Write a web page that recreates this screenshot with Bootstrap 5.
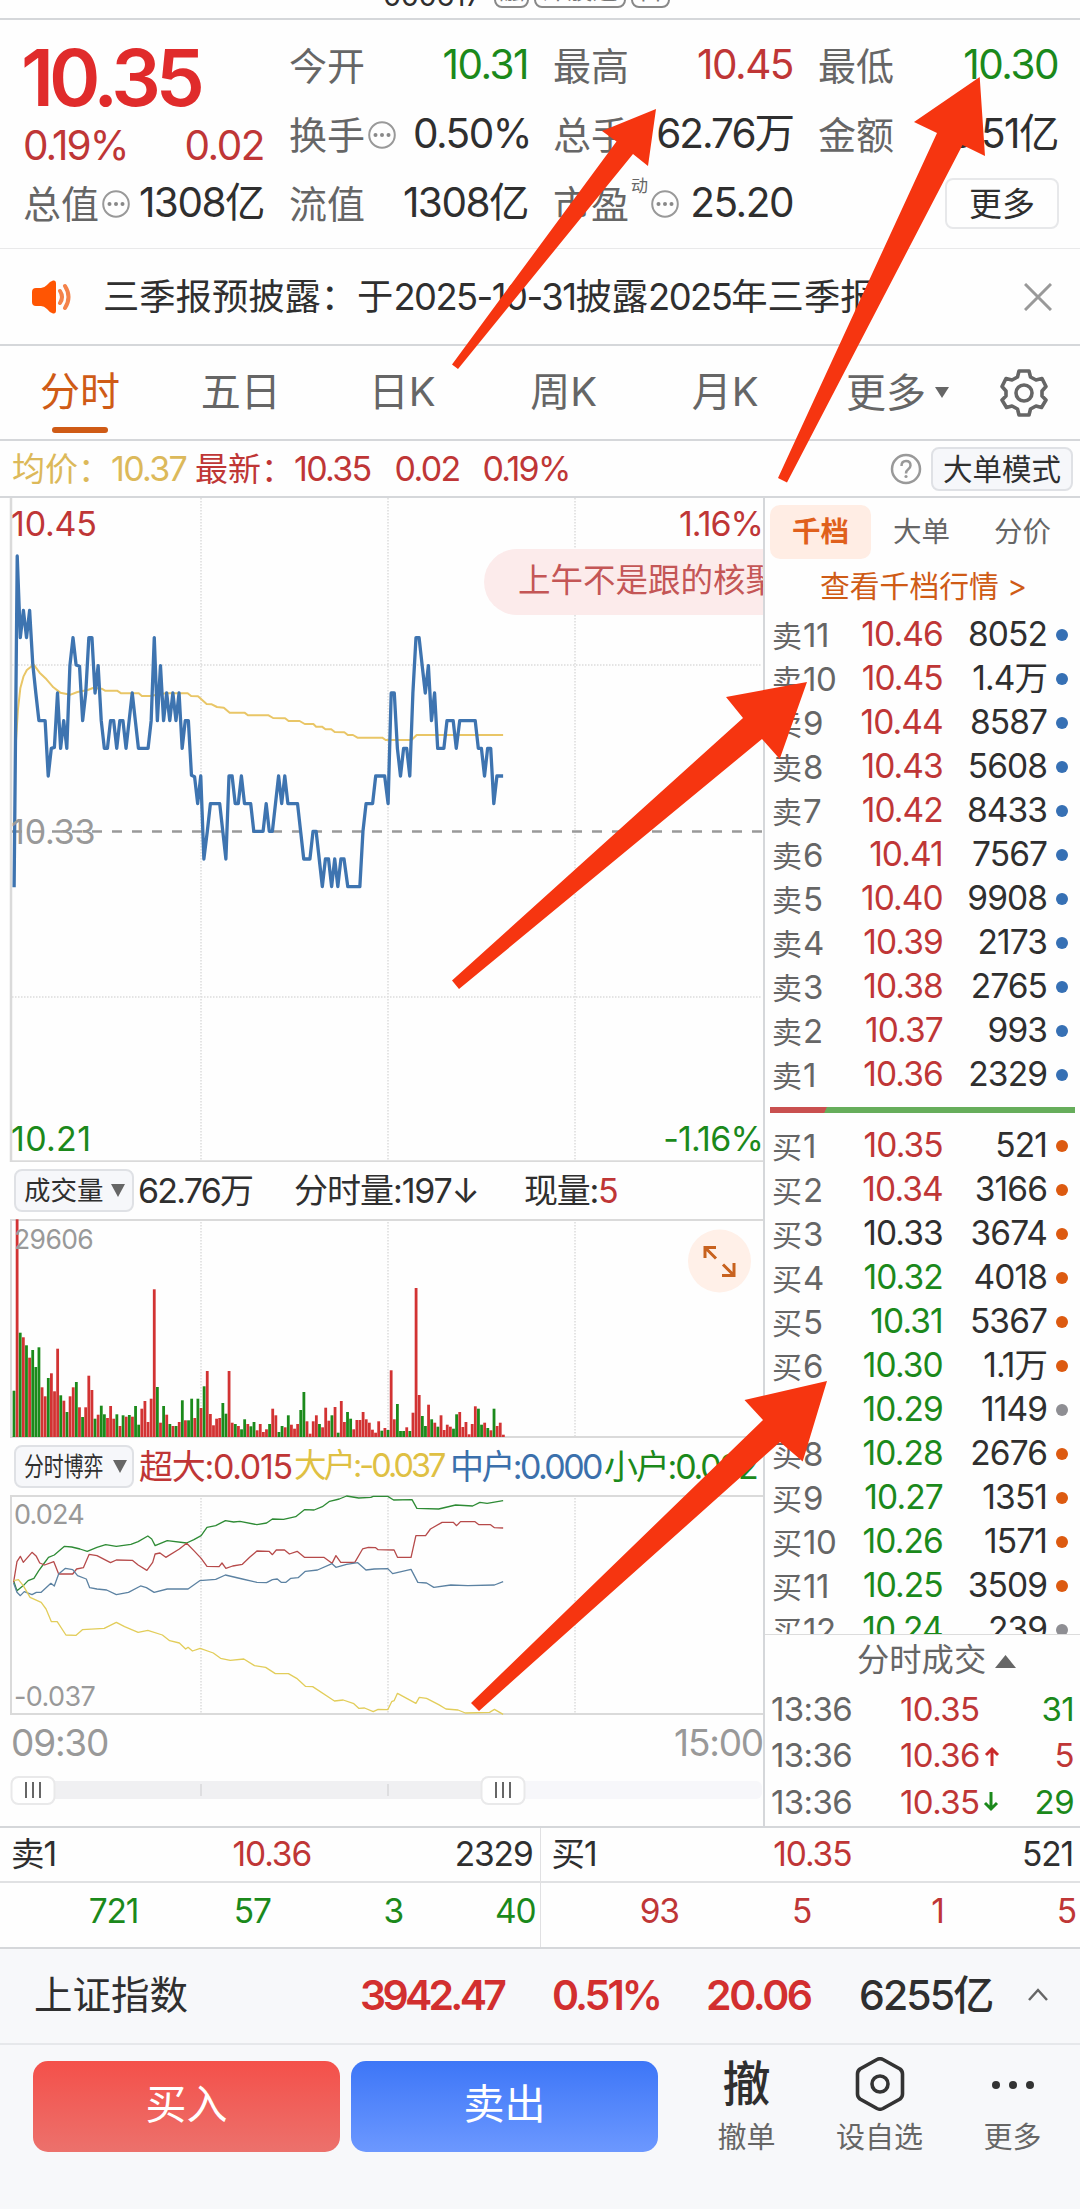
<!DOCTYPE html>
<html lang="zh-CN">
<head>
<meta charset="utf-8">
<meta name="viewport" content="width=device-width, initial-scale=1">
<title>000617 分时</title>
<link rel="stylesheet" href="https://cdn.jsdelivr.net/npm/bootstrap@5.3.0/dist/css/bootstrap.min.css">
<style>
:root{--up:#bf3636;--down:#1b891b;--ink:#2f2f2f;--soft:#666;--rule:#d5d7da;--brand:#cf5b16}
body{width:1080px;height:2209px;overflow:hidden;position:relative;background:#fefefe;color:var(--ink);font-family:Inter,"Noto Sans CJK SC",sans-serif;line-height:1}
svg{display:block;flex:none}
.up{color:var(--up)}.dn{color:var(--down)}.soft{color:var(--soft)}.pale{color:#999}.brand{color:var(--brand)}.gold{color:#dcb95a}
.rule-b{border-bottom:2px solid var(--rule)}
.topbar{height:20px;padding-left:383px;gap:5px}
.topbar .code{font-size:29px;line-height:30px;margin-top:-19px;width:106px;letter-spacing:-.5px}
.topbar .tagbox{border:2px solid #888;border-radius:8px;height:36px;margin-top:-28px;font-size:25px;color:#777;line-height:33px;text-align:center}
.quote{height:229px;padding:11px 23px 0 23px;grid-template-columns:241px 239px 240px 240px;column-gap:25px;display:grid;grid-template-rows:69px 69px 69px;border-bottom:1px solid #e9e9ea}
.quote .cell{display:flex;align-items:center;justify-content:space-between;font-size:40.5px;letter-spacing:-1.5px;white-space:nowrap}
.quote .lbl{font-size:38px;letter-spacing:0;color:var(--soft);display:flex;align-items:center}
.price{font-size:78px;font-weight:600;color:#e02b2b;letter-spacing:-5px;line-height:94px;margin-left:-2px}
.sup{font-size:17px;align-self:flex-start;margin:-7px 0 0 2px}
.btn-more{width:114px;height:51px;border:2px solid #e7e8ea;border-radius:8px;font-size:33px;letter-spacing:0;color:var(--ink);padding:0;position:relative;left:1px}
.notice{height:97px;padding:0 28px 0 31px}
.notice .msg{width:767px;margin-left:30px;overflow:hidden;white-space:nowrap;font-size:36.3px;line-height:52px}
.notice .msg b{font-weight:400;letter-spacing:-1.5px}
.tabs{height:95px;font-size:40px;color:var(--soft);padding-right:32px}
.tabs .tab{width:161.500px;height:93px;text-align:center;padding-top:26px;position:relative}
.tabs .tab.on{color:var(--brand)}
.tabs .tab.on:after{content:"";position:absolute;left:52px;bottom:6px;width:56px;height:6px;border-radius:3px;background:var(--brand)}
.avg{height:57px;font-size:34px;letter-spacing:-1.7px;padding:0 7px 0 12px;white-space:nowrap}
.avg i{font-style:normal;font-size:33px;letter-spacing:0}
.chip{background:#f6f7fa;border:2px solid #dfe1e5;border-radius:8px;padding:0;color:var(--ink)}
.main{height:1330px}
.left{width:765px;border-right:2px solid var(--rule);position:relative}
.plot{position:relative;margin-left:0}
.axis{position:absolute;font-size:34px;letter-spacing:-.2px;line-height:34px}
.bubble{position:absolute;left:484px;top:51px;width:279px;height:66px;border-radius:33px 0 0 33px;background:#fcebeb;color:#c45656;font-size:32.5px;line-height:64px;padding-left:34px;white-space:nowrap;overflow:hidden}
.strip{height:57px;padding-left:14px;font-size:34px;letter-spacing:-1.3px;white-space:nowrap}
.strip .chip{width:120px;height:43px;font-size:26.5px;letter-spacing:0;display:flex;align-items:center;padding-left:8px;flex:none}
.squeeze{display:inline-block;transform:scaleX(.75);transform-origin:left center;width:80px}
.right{width:315px}
.right .seg{height:54px;margin:7px 0 0 5px;font-size:28.5px;line-height:54px;text-align:center;color:var(--soft)}
.right .seg>div{width:101px}
.right .seg .on{background:#ffede4;border-radius:10px;color:#e0601c;font-weight:700}
.right .go{height:54px;line-height:54px;font-size:29.8px;padding-left:55px;color:var(--brand)}
.bk{height:44px;padding:0 12px 0 7px;font-size:33.5px;letter-spacing:-.9px;display:flex;align-items:center;white-space:nowrap}
.bk .n{width:84px;color:var(--soft);font-size:33px;letter-spacing:-.4px}
.bk .n u{text-decoration:none;font-size:30px;letter-spacing:1px}
.bk .p{width:88px;text-align:right}
.bk .q{width:105px;text-align:right}
.bk .o{width:12px;height:12px;border-radius:50%;margin-left:9px;background:#3670b4}
.split{height:6px;margin:10px 5px 11px;background:linear-gradient(115deg,#c9504f 18.4%,#66ad5b 18.6%)}
.buys{height:511px;overflow:hidden;border-bottom:1px solid #dcdcdc}
.deal{height:46.5px;padding:0 6px;font-size:33px;letter-spacing:-.6px;display:flex;align-items:center}
.half{width:541px;border-right:1px solid #e0e0e2}
.half .r1,.half .r2{display:flex;align-items:center;font-size:33.5px;letter-spacing:-1.1px}
.half .r1{height:55px;padding:0 7px 0 11px;border-bottom:2px solid #e0e1e3}
.half .r2{height:64px;padding:0 4px 6px 6px}
.half .r1>*{flex:1}.half .r2>*{width:132.4px;text-align:right}
.foot{background:#f7f8fa;height:260px}
.idx{height:96px;padding:0 32px 2px 34px;font-size:41px;font-weight:600;letter-spacing:-2.4px;border-bottom:2px solid #e6e8eb;white-space:nowrap}
.act{padding:16px 0 0 33px}
.act .btn{width:307px;height:91px;border:0;border-radius:15px;color:#fff;font-size:41px;padding:0 0 4px}
.buy{background:linear-gradient(#f4504a,#ec716c)}
.sell{background:linear-gradient(#3d76f7,#6c98ff)}
.tool{width:133px;text-align:center;font-size:29px;color:var(--soft)}
.tool .ic{height:46px;display:flex;align-items:center;justify-content:center;font-size:48px;color:var(--ink);font-weight:500;margin-bottom:16px}
.marks{position:absolute;left:0;top:0;z-index:5;pointer-events:none}
.thin{vector-effect:non-scaling-stroke;fill:none;stroke-linejoin:round}
</style>
</head>
<body>
<header class="topbar d-flex rule-b overflow-hidden">
  <div class="code">000617</div><div class="tagbox" style="width:35px">融</div><div class="tagbox" style="width:92px">深股通</div><div class="tagbox" style="width:39px">百</div>
</header>

<section class="quote">
  <div style="grid-row:1/3"><div class="price">10.35</div><div class="cell up" style="margin-top:1px"><span style="letter-spacing:-1.900px">0.19%</span><span>0.02</span></div></div>
  <div class="cell"><span class="lbl">今开</span><span class="dn">10.31</span></div>
  <div class="cell"><span class="lbl">最高</span><span class="up">10.45</span></div>
  <div class="cell"><span class="lbl">最低</span><span class="dn">10.30</span></div>
  <div class="cell"><span class="lbl">换手<svg width="32" height="30"><use href="#dots"/></svg></span><span style="margin-right:-3px">0.50%</span></div>
  <div class="cell"><span class="lbl">总手</span><span style="letter-spacing:-2px">62.76万</span></div>
  <div class="cell"><span class="lbl">金额</span><span>6.51亿</span></div>
  <div class="cell"><span class="lbl">总值<svg width="32" height="30"><use href="#dots"/></svg></span><span>1308亿</span></div>
  <div class="cell"><span class="lbl">流值</span><span>1308亿</span></div>
  <div class="cell"><span class="lbl">市盈<span class="sup">动</span><svg width="32" height="30"><use href="#dots"/></svg></span><span>25.20</span></div>
  <div class="cell justify-content-end"><button class="btn btn-more">更多</button></div>
</section>

<section class="notice d-flex align-items-center rule-b">
  <svg width="42" height="36" viewBox="0 0 42 36"><path d="M1 13q0-4 4-4h5q3 0 6-3 3-4 6-4.500 3-.5 3 3v27q0 3.500-3 3-3-.5-6-4.500-3-3-6-3H5q-4 0-4-4z" fill="#ff5503"/><path d="M29 12q4 6 0 12M34 7q7 11 0 22" fill="none" stroke="#f4824a" stroke-width="4" stroke-linecap="round"/></svg>
  <div class="msg">三季报预披露：于<b>2025-10-31</b>披露<b>2025</b>年三季报</div>
  <svg class="ms-auto" width="28" height="28" viewBox="-1 -1 28 28"><path d="M0 0l26 26M26 0L0 26" stroke="#999" stroke-width="3"/></svg>
</section>

<nav class="tabs d-flex align-items-center rule-b">
  <div class="tab on" style="width:160px">分时</div><div class="tab">五日</div><div class="tab">日K</div><div class="tab">周K</div><div class="tab">月K</div>
  <div class="d-flex align-items-center" style="margin-left:40px">更多<svg class="ms-2" width="16" height="13"><path d="M1 1h14L8 12z" fill="#666"/></svg></div>
  <svg class="ms-auto" width="48" height="50" viewBox="-24 -25 48 50" fill="none" stroke="#666" stroke-width="3.600"><path d="M-5-22H5L6.500-16 12-13 18-14.500 22-6.500 18-2V3L22 7 17.500 14.500 12 13 6.500 16 5 22H-5L-6.500 16-12 13-17.500 14.500-22 7-18 3V-2L-22-6.500-18-14.500-12-13-6.500-16z" stroke-linejoin="round"/><circle r="8"/></svg>
</nav>

<section class="avg d-flex align-items-center rule-b">
  <span class="gold"><i>均价：</i>10.37</span><span class="up" style="margin-left:9px"><i>最新：</i>10.35</span><span class="up" style="margin-left:24px">0.02</span><span class="up" style="margin-left:23px">0.19%</span>
  <svg class="ms-auto" width="32" height="32" viewBox="0 0 32 32"><circle cx="16" cy="16" r="14" fill="none" stroke="#999" stroke-width="2.500"/><path d="M11.500 13q0-5 4.500-5t4.500 4.500q0 2-2.500 4-2 1.500-2 4" fill="none" stroke="#999" stroke-width="2.500"/><circle cx="16" cy="23.500" r="1.600" fill="#999"/></svg>
  <button class="btn chip" style="width:142px;height:44px;font-size:29.500px;letter-spacing:0;line-height:38px;margin-left:9px">大单模式</button>
</section>

<main class="main d-flex rule-b">
  <div class="left">
    <div class="plot" style="height:664px">
      <svg width="763" height="664" viewBox="0 498 763 664">
        <g stroke="#dcdcdc" stroke-width="1.500" stroke-dasharray="1.500 1.500"><path d="M201 498V1162M388 498V1162M575 498V1162M12 665H762M12 997H762"/></g>
        <path d="M11 498V1162M11 1161.500H763" stroke="#dadada" stroke-width="2.500" fill="none"/>
        <path d="M12 831.500H762" stroke="#999" stroke-width="2.500" stroke-dasharray="10 10"/>
        <g transform="translate(0 490) scale(.34436 .33333)">
          <polyline class="thin" stroke="#e9c667" stroke-width="2" points="46,760 52,660 59,595 68,560 78,540 98,524 115,548 135,568 155,592 175,608 205,614 225,606 255,600 270,594 295,596 305,602 340,602 352,610 403,610 412,618 435,618 470,612 480,610 545,610 555,618 575,619 600,642 615,643 630,651 650,653 667,668 710,668 720,676 780,676 793,684 828,685 838,693 870,693 885,702 910,702 918,710 935,710 945,718 962,718 972,726 1000,727 1010,735 1025,735 1038,743 1110,743 1120,750 1195,750 1210,735 1461,735"/>
          <polyline class="thin" stroke="#3e74b0" stroke-width="3.300" points="41,1192 50,198 59,443 68,361 77,443 86,361 95,520 104,609 113,692 131,692 140,858 149,775 158,772 167,609 176,775 185,692 194,775 203,527 212,443 221,525 231,529 240,692 249,609 258,443 267,443 276,609 285,527 294,692 303,775 312,775 321,692 330,692 339,775 348,692 357,692 366,775 375,692 384,609 393,692 402,775 430,775 439,692 448,443 457,692 466,527 475,692 484,609 493,692 502,609 511,692 520,609 529,775 538,692 547,692 556,856 565,860 574,941 583,858 592,1107 602,1024 611,941 638,941 647,1024 656,1107 665,858 674,858 683,941 692,941 701,858 710,941 728,941 737,1024 764,1024 773,941 782,1024 791,1024 800,941 809,858 818,941 827,858 836,941 864,941 873,1024 882,1107 900,1107 909,1024 918,1024 927,1107 936,1190 945,1107 954,1107 963,1190 972,1107 981,1190 990,1107 999,1107 1010,1190 1045,1190 1054,1024 1063,941 1082,941 1091,858 1117,858 1127,941 1136,609 1145,609 1154,775 1163,858 1172,775 1181,775 1190,858 1199,609 1208,443 1217,443 1226,527 1235,609 1244,527 1253,692 1262,609 1271,775 1289,775 1298,692 1316,692 1325,775 1335,692 1380,692 1389,775 1398,775 1407,858 1416,775 1425,775 1434,941 1443,858 1461,858"/>
        </g>
      </svg>
      <div class="axis up" style="left:11px;top:9px">10.45</div>
      <div class="axis up" style="right:0;top:9px;letter-spacing:-1px">1.16%</div>
      <div class="axis pale" style="left:11px;top:317px">10.33</div>
      <div class="axis dn" style="left:11px;bottom:6px;letter-spacing:.3px">10.21</div>
      <div class="axis dn" style="right:0;bottom:6px;letter-spacing:-.8px">-1.16%</div>
      <div class="bubble">上午不是跟的核聚变</div>
    </div>
    <div class="strip d-flex align-items-center">
      <div class="chip"><span class="me-auto">成交量</span><svg width="22" height="15"><path d="M1 1h14L8 14z" fill="#666"/></svg></div>
      <span style="margin-left:4px;width:156px;letter-spacing:-1.800px">62.76万</span><span style="width:230px"><span style="letter-spacing:-1px">分时量:</span>197↓</span><span>现量:<span class="up">5</span></span>
    </div>
    <div class="plot" style="height:219px">
      <svg width="763" height="219" viewBox="0 1220 763 219">
        <path d="M201 1220V1438M388 1220V1438M575 1220V1438" stroke="#dcdcdc" stroke-width="1.500" stroke-dasharray="1.500 1.500"/>
        <path d="M763 1221H11V1438H763" stroke="#dadada" stroke-width="2" fill="none"/>
        <g id="vol"></g>
        <circle cx="719.500" cy="1262" r="31.500" fill="#fff0e8"/>
        <path d="M705 1259V1248.500H716M705.500 1249L716 1259.500M734 1264V1276.500H722M733.500 1276L723 1265.500" fill="none" stroke="#c8621f" stroke-width="3"/>
      </svg>
      <div class="axis pale" style="left:14px;top:3px;font-size:26.500px;letter-spacing:-.6px">29606</div>
    </div>
    <div class="strip d-flex align-items-center">
      <div class="chip"><span class="squeeze">分时博弈</span><svg style="margin-left:8px" width="18" height="15"><path d="M1 1h14L8 14z" fill="#666"/></svg></div>
      <span class="up" style="margin-left:5px;width:155px">超大:0.015</span><span style="color:#dfc043;width:156px;letter-spacing:-3px;font-size:32.500px">大户:-0.037</span><span style="color:#3b70ac;width:154px;letter-spacing:-2.600px">中户:0.000</span><span class="dn" style="letter-spacing:-2.200px">小户:0.022</span>
    </div>
    <div class="plot" style="height:220px">
      <svg width="763" height="220" viewBox="0 1496 763 220">
        <path d="M201 1496V1715M388 1496V1715M575 1496V1715" stroke="#dcdcdc" stroke-width="1.500" stroke-dasharray="1.500 1.500"/>
        <path d="M763 1497H11V1715H763" stroke="#dadada" stroke-width="2" fill="none"/>
        <g transform="translate(0 1440) scale(.48473 .33333)" stroke-width="1.300">
          <polyline class="thin" stroke="#2e8b35" points="28,425 35,455 50,437 58,425 70,418 80,395 90,375 100,355 112,348 133,322 148,324 165,330 180,337 200,325 218,317 240,322 270,316 285,308 305,291 313,300 320,320 345,305 385,312 400,302 415,290 427,265 445,260 465,245 482,249 495,247 530,257 550,252 562,240 585,241 610,233 628,212 648,213 665,203 680,187 700,180 715,171 740,177 765,175 770,172 800,172 812,183 850,182 860,208 905,210 940,198 975,201 990,190 1005,193 1038,185"/>
          <polyline class="thin" stroke="#b64a4a" points="28,430 35,368 42,352 48,370 66,340 75,352 82,372 92,378 111,368 121,405 150,405 158,390 172,386 184,346 200,350 228,371 240,363 273,364 285,378 303,394 315,370 320,345 330,342 342,355 370,330 385,313 400,335 415,358 427,382 452,383 458,372 466,388 480,381 500,376 515,355 530,336 555,337 562,347 570,333 587,333 597,345 613,337 628,355 668,355 685,373 693,350 703,370 732,370 748,330 760,325 775,326 780,332 813,333 820,355 848,355 858,290 878,290 888,270 912,250 935,250 942,260 950,248 980,248 988,257 1012,257 1020,266 1038,267"/>
          <polyline class="thin" stroke="#5c82a2" points="28,432 35,460 42,470 50,458 66,467 75,460 85,460 105,433 112,441 121,405 135,388 150,392 160,410 178,420 185,446 200,450 220,453 240,467 265,460 290,441 302,446 318,460 345,450 388,450 412,425 445,421 465,408 500,420 530,430 550,431 562,422 572,420 580,430 590,430 600,418 615,416 630,397 655,393 685,374 693,385 715,376 738,371 755,393 772,390 800,389 810,404 848,391 862,430 880,432 895,445 930,438 965,440 1020,438 1038,428"/>
          <polyline class="thin" stroke="#e2cd5a" points="28,425 38,422 48,440 62,475 85,490 95,510 106,548 118,548 136,588 157,589 170,572 215,568 240,550 257,563 285,580 305,574 335,588 350,605 370,612 383,630 388,625 397,636 413,628 440,642 455,658 475,664 503,660 525,680 548,685 568,704 595,704 612,718 630,742 645,743 690,786 708,783 730,794 740,808 752,807 770,818 780,811 800,812 808,788 813,785 820,763 858,793 865,775 880,778 905,797 920,810 945,813 960,822 1010,820 1020,811 1038,826"/>
        </g>
      </svg>
      <div class="axis pale" style="left:14px;top:3px;font-size:27px;letter-spacing:-.8px">0.024</div>
      <div class="axis pale" style="left:14px;bottom:1px;font-size:27px;letter-spacing:-.6px">-0.037</div>
    </div>
    <div class="d-flex justify-content-between pale" style="font-size:37px;letter-spacing:-1.200px;padding:9px 0 0 11px;height:54px"><span>09:30</span><span>15:00</span></div>
    <svg width="763" height="40" viewBox="0 1771 763 40">
      <rect x="12" y="1783" width="750" height="18" rx="6" fill="#f7f7fa"/><rect x="20" y="1783" width="480" height="18" fill="#f0f0f2"/>
      <path d="M201 1786v12M388 1786v12" stroke="#dedee0" stroke-width="2"/>
      <g fill="#fff" stroke="#e9e9ea" stroke-width="2"><rect x="11.500" y="1779" width="43" height="27" rx="7"/><rect x="481.500" y="1779" width="43" height="27" rx="7"/></g>
      <path d="M26 1784v16M33 1784v16M40 1784v16M496 1784v16M503 1784v16M510 1784v16" stroke="#666" stroke-width="2"/>
    </svg>
  </div>

  <div class="right">
    <div class="seg d-flex"><div class="on">千档</div><div>大单</div><div>分价</div></div>
    <div class="go">查看千档行情 &gt;</div>
    <div id="sells"></div>
    <div class="split"></div>
    <div id="buys" class="buys"></div>
    <div class="d-flex align-items-center soft" style="height:51px;padding-left:92px;font-size:32.300px">分时成交<svg style="margin-left:9px" width="22" height="14"><path d="M0 14L10.500 1 21 14z" fill="#666"/></svg></div>
    <div class="deal"><span class="soft" style="width:129px">13:36</span><span class="up">10.35</span><span class="ms-auto dn">31</span></div>
    <div class="deal"><span class="soft" style="width:129px">13:36</span><span class="up">10.36</span><svg class="ms-1" width="16" height="20"><path d="M8 20V3M2 9l6-6 6 6" fill="none" stroke="#c92a2a" stroke-width="3"/></svg><span class="ms-auto up">5</span></div>
    <div class="deal"><span class="soft" style="width:129px">13:36</span><span class="up">10.35</span><svg class="ms-1" width="16" height="20"><path d="M8 0V17M2 11l6 6 6-6" fill="none" stroke="#1b891b" stroke-width="3"/></svg><span class="ms-auto dn">29</span></div>
  </div>
</main>

<section class="d-flex rule-b">
  <div class="half"><div class="r1"><span>卖1</span><span class="up text-center">10.36</span><span class="text-end">2329</span></div><div class="r2 dn"><span>721</span><span>57</span><span>3</span><span>40</span></div></div>
  <div class="half border-end-0"><div class="r1"><span>买1</span><span class="up text-center">10.35</span><span class="text-end">521</span></div><div class="r2 up"><span>93</span><span>5</span><span>1</span><span>5</span></div></div>
</section>

<footer class="foot">
  <div class="idx d-flex align-items-center">
    <span style="font-size:38.500px;font-weight:400;letter-spacing:0;width:326px">上证指数</span><span style="color:#d22f2f;width:192px;letter-spacing:-3.700px">3942.47</span><span style="color:#d22f2f;width:154px;letter-spacing:-3px">0.51%</span><span style="color:#d22f2f;width:153px">20.06</span><span style="font-weight:500;letter-spacing:-1.900px">6255亿</span>
    <svg class="ms-auto" width="20" height="14"><path d="M1 12L10 2l9 10" fill="none" stroke="#666" stroke-width="2.500"/></svg>
  </div>
  <div class="act d-flex">
    <button class="btn buy">买入</button><button class="btn sell" style="margin-left:11px">卖出</button>
    <div class="tool" style="margin-left:22px"><div class="ic">撤</div>撤单</div>
    <div class="tool"><div class="ic"><svg width="50" height="54" viewBox="-25 -27 50 54" fill="none" stroke="#333" stroke-width="3.600"><path d="M-3-24.500Q0-26 3-24.500L20-15Q22.500-13 22.500-10V10Q22.500 13 20 15L3 24.500Q0 26-3 24.500L-20 15Q-22.500 13-22.500 10V-10Q-22.500-13-20-15z"/><circle r="8"/></svg></div>设自选</div>
    <div class="tool"><div class="ic"><svg width="44" height="10"><g fill="#333"><circle cx="5" cy="6" r="4"/><circle cx="22" cy="6" r="4"/><circle cx="39" cy="6" r="4"/></g></svg></div>更多</div>
  </div>
</footer>

<svg class="marks" width="1080" height="2209" fill="#f63510">
  <defs><g id="dots"><circle cx="17" cy="15" r="12.800" fill="none" stroke="#999" stroke-width="2"/><g fill="#888"><circle cx="10.500" cy="15" r="2"/><circle cx="17" cy="15" r="2"/><circle cx="23.500" cy="15" r="2"/></g></g></defs>
  <path d="M656 109L602 131 616.500 141.500 452 364.500 458 369 633 154 648 166z"/>
  <path d="M979.700 77L914 122 937 133 778 478 787 482.500 962.500 145 985 156z"/>
  <path d="M807 682L726 697 743 718 452 980.500 459 989 762 739 779.700 759z"/>
  <path d="M827 1381L744.500 1400 763 1420 471 1703 479 1711 780 1442 802.700 1461.500z"/>
</svg>

<script src="https://cdn.jsdelivr.net/npm/bootstrap@5.3.0/dist/js/bootstrap.bundle.min.js"></script>
<script>
// Order book: side label, level, price, quantity, price class, marker colour
const row=(s,n,p,q,c,o)=>`<div class="bk"><span class="n"><u>${s}</u>${n}</span><span class="p ${c}">${p}</span><span class="q">${q}</span><span class="o" style="background:${o}"></span></div>`;
const sells=['8052','1.4万','8587','5608','8433','7567','9908','2173','2765','993','2329'];
document.getElementById('sells').innerHTML=sells.map((q,i)=>row('卖',11-i,(10.46-i*.01).toFixed(2),q,'up','#3670b4')).join('');
const buys=['521','3166','3674','4018','5367','1.1万','1149','2676','1351','1571','3509','239'];
document.getElementById('buys').innerHTML=buys.map((q,i)=>row('买',i+1,(10.35-i*.01).toFixed(2),q,i<2?'up':i<3?'':'dn',(i===6||i===11)?'#8e8e93':'#dc5a10')).join('');
// Per-minute volume: colour letter and height in thirds of a pixel
const v='g139 r653 g313 r299 g275 r238 g261 g210 g269 r149 r122 g177 r191 r137 r265 g125 r109 g75 r122 r149 g165 r89 g60 r89 r184 r141 g55 r67 g94 g68 r57 r93 r55 g68 r33 g65 r61 g66 r61 g93 g37 r85 r108 r45 r115 r443 g150 r43 g93 r67 g39 r33 g33 r45 g110 r50 g50 g115 r57 g115 r87 g152 r198 r69 r35 r55 r57 g102 g70 r198 r43 g39 r33 g23 g53 r39 g32 g45 r20 r39 r15 r23 g39 r85 r65 g15 g33 r29 g65 r37 r25 r39 g81 g135 r47 r10 r47 r65 g39 r29 r88 r49 g65 r90 g13 r108 r45 g75 g55 r23 r51 r51 r75 r53 r43 r22 r13 r47 g19 r27 g21 r200 r53 g99 g18 g18 r29 g18 r73 r447 r126 g63 g33 r97 g53 r43 g31 r65 r21 r37 r31 g25 g68 r75 r30 r45 r8 r39 r92 g85 g37 r43 g27 r20 g85 r33 r43 r7'.split(' ');
document.getElementById('vol').innerHTML=v.map((s,i)=>{const h=s.slice(1)/3;return `<rect x="${(12.6+i*3.117).toFixed(2)}" y="${(1438-h).toFixed(1)}" width="2.8" height="${h.toFixed(1)}" fill="${s[0]==='r'?'#d23333':'#1b8a1b'}"/>`}).join('');
</script>
</body>
</html>
